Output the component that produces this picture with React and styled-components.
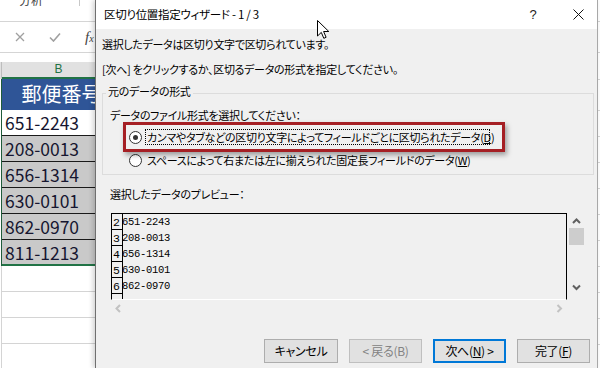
import React from "react";
import styled, { createGlobalStyle } from "styled-components";

const Global = createGlobalStyle`
  html, body { margin: 0; padding: 0; background: #fff; }
  body { font-family: "Noto Sans CJK JP", "Noto Sans", sans-serif; }
  * { box-sizing: border-box; }
`;

const JP = `"Noto Sans CJK JP", "Noto Sans", sans-serif`;

const Screen = styled.div`
  position: relative;
  width: 600px;
  height: 368px;
  overflow: hidden;
  display: flex;
  background: #fff;
  font-family: ${JP};
  font-feature-settings: "palt";
`;

/* ---------- Excel sheet (background) ---------- */
const Sheet = styled.div`
  width: 95px;
  flex: none;
  overflow: hidden;
  display: flex;
  flex-direction: column;
  background: #fff;
`;

const Ribbon = styled.div`
  height: 22px;
  flex: none;
  display: flex;
  align-items: flex-start;
  border-bottom: 1px solid #d5d5d5;
`;

const RibbonLabel = styled.span`
  margin: -8px 0 0 19px;
  font-size: 12px;
  line-height: 16px;
  color: #444;
`;

const RibbonSep = styled.span`
  margin-left: auto;
  margin-right: 15px;
  width: 1px;
  height: 6px;
  background: #c8c8c8;
`;

const FormulaBar = styled.div`
  height: 31px;
  flex: none;
  display: flex;
  align-items: center;
  gap: 24px;
  padding-left: 15px;
  border-bottom: 1px solid #d5d5d5;
  white-space: nowrap;
`;

const Fx = styled.span`
  font-family: "Liberation Serif", serif;
  font-style: italic;
  font-size: 15px;
  color: #444;
  & > small { font-size: 10px; }
`;

const Gap = styled.div`
  height: ${(p) => p.$h}px;
  flex: none;
`;

const GridRow = styled.div`
  display: flex;
  flex: none;
  width: 115px;
`;

const Stub = styled.div`
  width: 2px;
  flex: none;
  background: ${(p) => p.$bg || "#fff"};
  border-right: 1px solid ${(p) => p.$line || "#d4d4d4"};
`;

const ColHeader = styled.div`
  width: 113px;
  height: 17px;
  background: #e1e1e1;
  border-bottom: 2px solid #217346;
  color: #217346;
  font-family: "Liberation Sans", sans-serif;
  font-size: 12px;
  line-height: 15px;
  text-align: center;
`;

const HeadCell = styled.div`
  width: 113px;
  height: 31px;
  background: #2f5597;
  color: #fff;
  font-size: 20px;
  line-height: 30px;
  text-align: center;
  white-space: nowrap;
  padding-left: 6px;
`;

const DataCell = styled.div`
  width: 113px;
  height: 26px;
  background: ${(p) => (p.$active ? "#fff" : "#c9c9c9")};
  border-bottom: ${(p) => (p.$last ? "2px solid #217346" : "1px solid #1a1a1a")};
  color: #161630;
  font-size: 17.5px;
  line-height: 25px;
  padding-left: 3px;
  white-space: nowrap;
`;

const EmptyCell = styled.div`
  width: 113px;
  height: 26px;
  border-bottom: 1px solid #d4d4d4;
`;

/* ---------- Dialog ---------- */
const Dialog = styled.div`
  position: relative;
  z-index: 1;
  width: 503px;
  flex: none;
  display: flex;
  flex-direction: column;
  background: #f0f0f0;
  border-left: 1px solid #707070;
  border-right: 1px solid #a8a8a8;
  box-shadow: -2px 0 5px rgba(0, 0, 0, 0.18);
  color: #000;
  font-size: 11px;
  letter-spacing: -0.3px;
`;

const TitleBar = styled.div`
  height: 29px;
  flex: none;
  background: #fff;
  display: flex;
  align-items: center;
  padding-left: 8px;
`;

const Title = styled.span`
  font-size: 11.5px;
  line-height: 16px;
  margin-top: -1px;
  color: #000;
`;

const Caption = styled.div`
  margin-left: auto;
  margin-right: 2px;
  display: flex;
  gap: 11px;
`;

const CaptionBtn = styled.span`
  width: 34px;
  height: 29px;
  display: flex;
  align-items: center;
  justify-content: center;
  font-family: "Liberation Sans", sans-serif;
  font-size: 13px;
  color: #222;
`;

const Body = styled.div`
  flex: 1;
  display: flex;
  flex-direction: column;
  padding: 0 3px 0 6px;
`;

const Line = styled.div`
  line-height: ${(p) => p.$lh || 18}px;
  margin-top: ${(p) => p.$mt || 0}px;
  margin-left: ${(p) => p.$ml || 0}px;
  white-space: nowrap;
`;

const GroupBox = styled.div`
  position: relative;
  margin-top: 15px;
  height: 82px;
  border: 1px solid #dcdcdc;
  display: flex;
  flex-direction: column;
`;

const Legend = styled.span`
  align-self: flex-start;
  margin: -11px 0 0 3px;
  padding: 0 2px;
  line-height: 16px;
  background: #f0f0f0;
`;

const RadioRow = styled.div`
  display: flex;
  align-items: center;
  height: 18px;
  margin-top: 5px;
  padding-left: 26px;
  gap: 3px;
  white-space: nowrap;
`;

const Radio = styled.span`
  width: 13px;
  height: 13px;
  flex: none;
  border-radius: 50%;
  border: 1px solid #333;
  background: #fff;
  display: flex;
  align-items: center;
  justify-content: center;
  &::after {
    content: "";
    width: 5px;
    height: 5px;
    border-radius: 50%;
    background: ${(p) => (p.$on ? "#333" : "transparent")};
  }
`;

const RadioLabel = styled.span`
  line-height: 14px;
  padding: 0 0 0 1px;
  border: 1px dotted ${(p) => (p.$focus ? "#000" : "transparent")};
  width: ${(p) => (p.$focus ? "345px" : "auto")};
`;

const Highlight = styled.div`
  position: absolute;
  left: 20px;
  top: 28px;
  width: 382px;
  height: 30px;
  border: 3px solid #a51f24;
  box-shadow: 2px 3px 5px rgba(0, 0, 0, 0.35);
  pointer-events: none;
`;

const PreviewFrame = styled.div`
  margin: 11px 0 0 9px;
  display: grid;
  grid-template-columns: 456px 18px;
  grid-template-rows: 87px 17px;
  width: 474px;
`;

const PreviewBox = styled.div`
  border-top: 1px solid #000;
  border-left: 1px solid #000;
  border-right: 1px solid #000;
  border-bottom: 1px solid #fff;
  overflow: hidden;
  display: flex;
  flex-direction: column;
  letter-spacing: 0;
`;

const PRow = styled.div`
  display: flex;
  height: 16px;
  flex: none;
`;

const PNum = styled.span`
  width: 11px;
  flex: none;
  border-right: 1px solid #000;
  border-bottom: 1px solid #000;
  font-family: "Liberation Mono", monospace;
  font-size: 11.5px;
  line-height: 18px;
  padding-left: 1px;
  overflow: hidden;
`;

const PText = styled.span`
  font-family: "Liberation Mono", monospace;
  font-size: 10.5px;
  line-height: 16px;
  margin-left: -1px;
  letter-spacing: -0.3px;
`;

const VScroll = styled.div`
  display: flex;
  flex-direction: column;
  align-items: center;
`;

const Thumb = styled.div`
  width: 15px;
  height: 17px;
  background: #cdcdcd;
  margin: 3px 0 0 1px;
`;

const HScroll = styled.div`
  display: flex;
  align-items: center;
  justify-content: space-between;
  padding: 0 4px 0 4px;
`;

const Buttons = styled.div`
  margin: 22px 4px 0 0;
  display: flex;
  justify-content: flex-end;
  gap: 11px;
`;

const Button = styled.button`
  width: ${(p) => p.$w || 73}px;
  height: 24px;
  padding: 0;
  background: #e1e1e1;
  border: ${(p) =>
    p.$default ? "2px solid #0078d7" : p.disabled ? "1px solid #bfbfbf" : "1px solid #adadad"};
  color: ${(p) => (p.disabled ? "#838383" : "#000")};
  font-family: ${JP};
  font-feature-settings: "palt";
  font-size: 12px;
  letter-spacing: -0.3px;
  line-height: 16px;
  & u { text-underline-offset: 1px; }
`;

const RightStrip = styled.div`
  flex: 1;
  display: flex;
  flex-direction: column;
  background: #fff;
`;

const StripLine = styled.div`
  height: ${(p) => p.$h}px;
  flex: none;
  border-bottom: 1px solid #d4d4d4;
`;

const Cursor = styled.svg`
  position: absolute;
  left: 317px;
  top: 20px;
  z-index: 5;
`;

const Chevron = ({ dir, color = "#606060" }) => {
  const paths = {
    up: "M1 5 L4.5 1.5 L8 5",
    down: "M1 1.5 L4.5 5 L8 1.5",
    left: "M5 1 L1.5 4.5 L5 8",
    right: "M1.5 1 L5 4.5 L1.5 8",
  };
  const vertical = dir === "up" || dir === "down";
  return (
    <svg width={vertical ? 9 : 7} height={vertical ? 7 : 9} viewBox={vertical ? "0 0 9 7" : "0 0 7 9"}>
      <path d={paths[dir]} fill="none" stroke={color} strokeWidth="2" />
    </svg>
  );
};

const previewRows = [
  ["2", "651-2243"],
  ["3", "208-0013"],
  ["4", "656-1314"],
  ["5", "630-0101"],
  ["6", "862-0970"],
  ["", ""],
];

const codes = ["651-2243", "208-0013", "656-1314", "630-0101", "862-0970", "811-1213"];

export default function App() {
  return (
    <>
      <Global />
      <Screen>
        <Sheet>
          <Ribbon>
            <RibbonLabel>分析</RibbonLabel>
            <RibbonSep />
          </Ribbon>
          <FormulaBar>
            <svg width="10" height="10" viewBox="0 0 10 10">
              <path d="M1 1 L9 9 M9 1 L1 9" stroke="#a0a0a0" strokeWidth="1.3" fill="none" />
            </svg>
            <svg width="12" height="10" viewBox="0 0 12 10">
              <path d="M1 5.5 L4.5 9 L11 1.5" stroke="#a0a0a0" strokeWidth="1.6" fill="none" />
            </svg>
            <Fx>
              f<small>x</small>
            </Fx>
          </FormulaBar>
          <Gap $h={9} />
          <GridRow>
            <Stub $bg="#e1e1e1" $line="#bdbdbd" />
            <ColHeader>B</ColHeader>
          </GridRow>
          <GridRow>
            <Stub $line="#1f5c3a" />
            <HeadCell>郵便番号</HeadCell>
          </GridRow>
          {codes.map((c, i) => (
            <GridRow key={c}>
              <Stub $line="#1f5c3a" />
              <DataCell $active={i === 0} $last={i === codes.length - 1}>
                {c}
              </DataCell>
            </GridRow>
          ))}
          {[0, 1, 2, 3].map((i) => (
            <GridRow key={i}>
              <Stub $line="#d4d4d4" />
              <EmptyCell />
            </GridRow>
          ))}
        </Sheet>

        <Dialog>
          <TitleBar>
            <Title>区切り位置指定ウィザード - 1 / 3</Title>
            <Caption>
              <CaptionBtn>?</CaptionBtn>
              <CaptionBtn>
                <svg width="11" height="11" viewBox="0 0 11 11">
                  <path d="M0.5 0.5 L10.5 10.5 M10.5 0.5 L0.5 10.5" stroke="#111" strokeWidth="1" fill="none" />
                </svg>
              </CaptionBtn>
            </Caption>
          </TitleBar>
          <Body>
            <Line $mt={6}>選択したデータは区切り文字で区切られています。</Line>
            <Line $mt={7}>[次へ] をクリックするか、区切るデータの形式を指定してください。</Line>
            <GroupBox>
              <Legend>元のデータの形式</Legend>
              <Line $lh={16} $mt={8} $ml={7}>
                データのファイル形式を選択してください：
              </Line>
              <RadioRow>
                <Radio $on />
                <RadioLabel $focus>
                  カンマやタブなどの区切り文字によってフィールドごとに区切られたデータ(<u>D</u>)
                </RadioLabel>
              </RadioRow>
              <RadioRow>
                <Radio />
                <RadioLabel>
                  スペースによって右または左に揃えられた固定長フィールドのデータ(<u>W</u>)
                </RadioLabel>
              </RadioRow>
              <Highlight />
            </GroupBox>
            <Line $lh={16} $mt={11} $ml={8}>
              選択したデータのプレビュー：
            </Line>
            <PreviewFrame>
              <PreviewBox>
                {previewRows.map(([n, t], i) => (
                  <PRow key={i}>
                    <PNum>{n}</PNum>
                    <PText>{t}</PText>
                  </PRow>
                ))}
              </PreviewBox>
              <VScroll>
                <Gap $h={5} />
                <Chevron dir="up" />
                <Thumb />
                <Gap $h={39} />
                <Chevron dir="down" />
              </VScroll>
              <HScroll>
                <Chevron dir="left" color="#c2c2c2" />
                <Chevron dir="right" color="#c2c2c2" />
              </HScroll>
            </PreviewFrame>
            <Buttons>
              <Button $w={74}>キャンセル</Button>
              <Button disabled>&lt; 戻る(B)</Button>
              <Button $default>
                次へ(<u>N</u>) &gt;
              </Button>
              <Button>
                完了(<u>F</u>)
              </Button>
            </Buttons>
          </Body>
        </Dialog>

        <RightStrip>
          <StripLine $h={22} />
          <StripLine $h={31} />
          <StripLine $h={27} />
          <StripLine $h={31} />
          <StripLine $h={26} />
          <StripLine $h={26} />
          <StripLine $h={26} />
          <StripLine $h={26} />
          <StripLine $h={26} />
          <StripLine $h={26} />
          <StripLine $h={26} />
          <StripLine $h={26} />
          <StripLine $h={26} />
        </RightStrip>

        <Cursor width="13" height="20" viewBox="0 0 13 20">
          <path
            d="M0.5 0.5 L0.5 16 L4.3 12.4 L6.8 18.3 L9.1 17.3 L6.6 11.5 L11.8 11.5 Z"
            fill="#fff"
            stroke="#000"
            strokeWidth="1"
            strokeLinejoin="miter"
          />
        </Cursor>
      </Screen>
    </>
  );
}
